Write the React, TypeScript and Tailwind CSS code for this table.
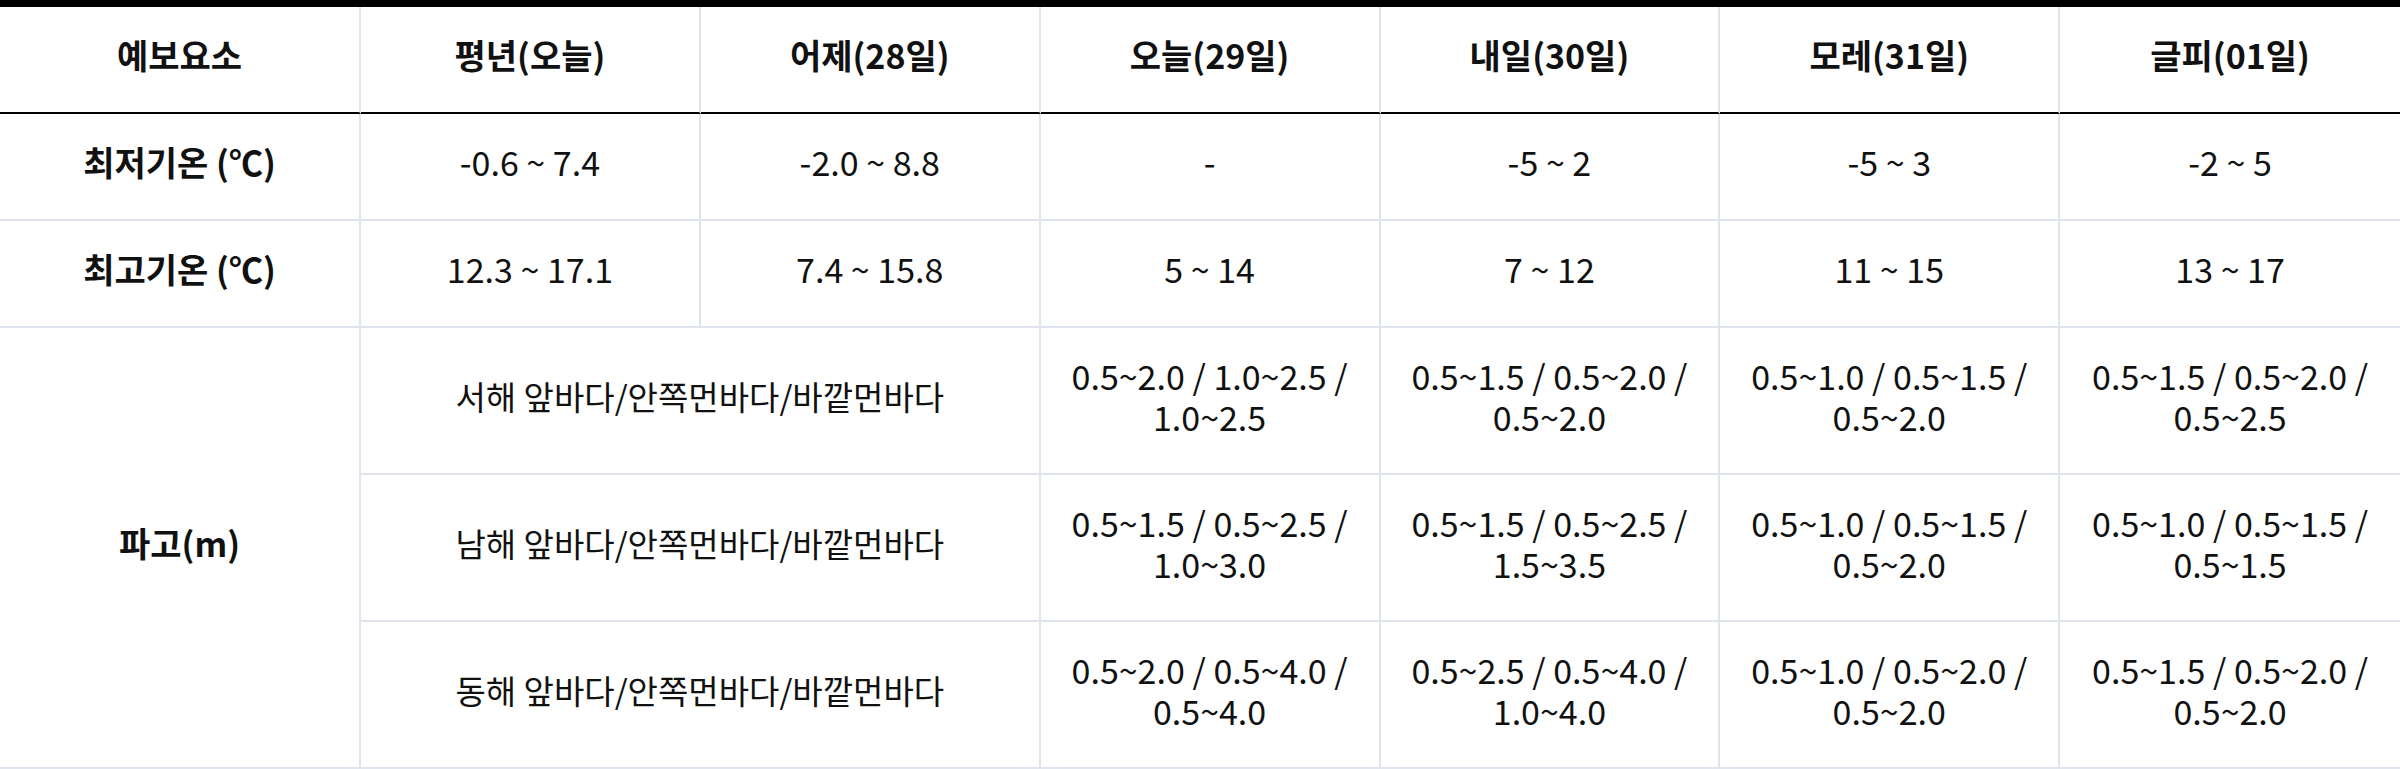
import React from "react";

const LINE = "border-[#dfe4ee]";

const headers = ["예보요소", "평년(오늘)", "어제(28일)", "오늘(29일)", "내일(30일)", "모레(31일)", "글피(01일)"];

const tempRows = [
  { label: "최저기온 (℃)", values: ["-0.6 ~ 7.4", "-2.0 ~ 8.8", "-", "-5 ~ 2", "-5 ~ 3", "-2 ~ 5"] },
  { label: "최고기온 (℃)", values: ["12.3 ~ 17.1", "7.4 ~ 15.8", "5 ~ 14", "7 ~ 12", "11 ~ 15", "13 ~ 17"] },
];

const waveRows = [
  {
    label: "서해 앞바다/안쪽먼바다/바깥먼바다",
    values: [
      ["0.5~2.0 / 1.0~2.5 /", "1.0~2.5"],
      ["0.5~1.5 / 0.5~2.0 /", "0.5~2.0"],
      ["0.5~1.0 / 0.5~1.5 /", "0.5~2.0"],
      ["0.5~1.5 / 0.5~2.0 /", "0.5~2.5"],
    ],
  },
  {
    label: "남해 앞바다/안쪽먼바다/바깥먼바다",
    values: [
      ["0.5~1.5 / 0.5~2.5 /", "1.0~3.0"],
      ["0.5~1.5 / 0.5~2.5 /", "1.5~3.5"],
      ["0.5~1.0 / 0.5~1.5 /", "0.5~2.0"],
      ["0.5~1.0 / 0.5~1.5 /", "0.5~1.5"],
    ],
  },
  {
    label: "동해 앞바다/안쪽먼바다/바깥먼바다",
    values: [
      ["0.5~2.0 / 0.5~4.0 /", "0.5~4.0"],
      ["0.5~2.5 / 0.5~4.0 /", "1.0~4.0"],
      ["0.5~1.0 / 0.5~2.0 /", "0.5~2.0"],
      ["0.5~1.5 / 0.5~2.0 /", "0.5~2.0"],
    ],
  },
];

export default function App() {
  return (
    <div
      className="w-[2400px] h-[769px] bg-white text-[#111111] overflow-hidden"
      style={{ fontFamily: '"Noto Sans CJK KR", "Noto Sans", sans-serif' }}
    >
      <div className="border-t-[7px] border-black grid grid-cols-[361px_repeat(6,minmax(0,1fr))] grid-rows-[107px_107px_107px_147px_147px_147px] text-[34px] leading-[1.2]">
        {headers.map((h, i) => (
          <div
            key={h}
            className={`flex items-center justify-center pb-[8px] font-bold border-b-2 border-b-black ${
              i < 6 ? `border-r-2 ${LINE}` : ""
            }`}
          >
            {h}
          </div>
        ))}

        {tempRows.map((r) => (
          <React.Fragment key={r.label}>
            <div className={`flex items-center justify-center pb-[8px] font-bold border-b-2 border-r-2 ${LINE}`}>{r.label}</div>
            {r.values.map((v, i) => (
              <div
                key={i}
                className={`flex items-center justify-center pb-[8px] border-b-2 ${LINE} ${i < 5 ? "border-r-2" : ""}`}
              >
                {v}
              </div>
            ))}
          </React.Fragment>
        ))}

        <div className={`row-span-3 flex items-center justify-center pb-[8px] font-bold border-b-2 border-r-2 ${LINE}`}>
          파고(m)
        </div>
        {waveRows.map((r) => (
          <React.Fragment key={r.label}>
            <div className={`col-span-2 flex items-center justify-center pb-[8px] text-[33px] border-b-2 border-r-2 ${LINE}`}>
              {r.label}
            </div>
            {r.values.map((v, i) => (
              <div
                key={i}
                className={`flex items-center justify-center pb-[8px] text-center border-b-2 ${LINE} ${
                  i < 3 ? "border-r-2" : ""
                }`}
              >
                <p>
                  {v[0]}
                  <br />
                  {v[1]}
                </p>
              </div>
            ))}
          </React.Fragment>
        ))}
      </div>
    </div>
  );
}
